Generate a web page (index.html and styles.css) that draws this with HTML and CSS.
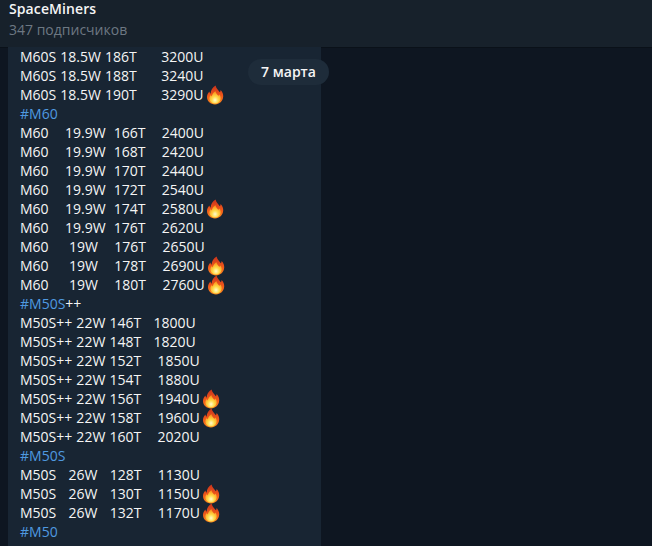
FILE: index.html
```html
<!DOCTYPE html>
<html lang="en">
<head>
  <meta charset="UTF-8">
  <meta name="viewport" content="width=device-width, initial-scale=1.0">
  <title>SpaceMiners</title>
  <link rel="stylesheet" href="styles.css">
</head>
<body>
  <svg class="defs" width="0" height="0" aria-hidden="true">
    <defs>
      <linearGradient id="flameOuter" x1="0" y1="0" x2="0" y2="1">
        <stop offset="0" stop-color="#c9331c"/>
        <stop offset="0.55" stop-color="#f0591a"/>
        <stop offset="1" stop-color="#fb8a1e"/>
      </linearGradient>
      <radialGradient id="flameInner" cx="50%" cy="72%" r="62%">
        <stop offset="0" stop-color="#fffbd0"/>
        <stop offset="0.45" stop-color="#ffdc4a"/>
        <stop offset="1" stop-color="#fb9a1e"/>
      </radialGradient>
      <symbol id="flame" viewBox="0 0 20 20">
        <path fill="url(#flameOuter)" d="M10.6 0.6C11.2 3.6 13 5 14.8 7.2C15.4 6.6 15.6 5.8 15.6 5C17.6 7 18.4 9.4 18.2 11.8C17.9 16.2 14.4 19.4 10 19.4C5.6 19.4 2 16.2 2 12C2 9.6 3 7.8 4.4 6.4C4.5 7.4 4.9 8.2 5.6 8.8C5.6 5.6 7.6 2.4 10.6 0.6Z"/>
        <path fill="url(#flameInner)" d="M10.4 6.2C11 8.6 12.4 9.4 13.4 10.8C14 10.4 14.2 9.9 14.3 9.4C15.4 10.8 15.9 12.2 15.7 13.6C15.4 16.6 13 18.6 10 18.6C7 18.6 4.5 16.6 4.4 13.6C4.3 12 5 10.8 5.9 10C6.1 10.6 6.4 11.1 6.9 11.5C7 9.4 8.4 7.4 10.4 6.2Z"/>
      </symbol>
    </defs>
  </svg>

  <header class="top-bar">
    <div class="channel-name">SpaceMiners</div>
    <div class="channel-subs">347 подписчиков</div>
  </header>

  <main class="chat">
    <div class="bubble">
      <div class="line">M60S 18.5W 186T      3200U</div>
      <div class="line">M60S 18.5W 188T      3240U</div>
      <div class="line">M60S 18.5W 190T      3290U<svg class="fire"><use href="#flame"/></svg></div>
      <div class="line"><a class="tag">#M60</a></div>
      <div class="line">M60    19.9W  166T    2400U</div>
      <div class="line">M60    19.9W  168T    2420U</div>
      <div class="line">M60    19.9W  170T    2440U</div>
      <div class="line">M60    19.9W  172T    2540U</div>
      <div class="line">M60    19.9W  174T    2580U<svg class="fire"><use href="#flame"/></svg></div>
      <div class="line">M60    19.9W  176T    2620U</div>
      <div class="line">M60     19W    176T    2650U</div>
      <div class="line">M60     19W    178T    2690U<svg class="fire"><use href="#flame"/></svg></div>
      <div class="line">M60     19W    180T    2760U<svg class="fire"><use href="#flame"/></svg></div>
      <div class="line"><a class="tag">#M50S</a>++</div>
      <div class="line">M50S++ 22W 146T   1800U</div>
      <div class="line">M50S++ 22W 148T   1820U</div>
      <div class="line">M50S++ 22W 152T    1850U</div>
      <div class="line">M50S++ 22W 154T    1880U</div>
      <div class="line">M50S++ 22W 156T    1940U<svg class="fire"><use href="#flame"/></svg></div>
      <div class="line">M50S++ 22W 158T    1960U<svg class="fire"><use href="#flame"/></svg></div>
      <div class="line">M50S++ 22W 160T    2020U</div>
      <div class="line"><a class="tag">#M50S</a></div>
      <div class="line">M50S   26W   128T    1130U</div>
      <div class="line">M50S   26W   130T    1150U<svg class="fire"><use href="#flame"/></svg></div>
      <div class="line">M50S   26W   132T    1170U<svg class="fire"><use href="#flame"/></svg></div>
      <div class="line"><a class="tag">#M50</a></div>
    </div>
    <div class="date-pill">7 марта</div>
  </main>
</body>
</html>
```

FILE: styles.css
```css
html, body {
  height: 100%;
}

body {
  margin: 0;
  overflow: hidden;
  display: flex;
  flex-direction: column;
  background-color: #0e1621;
  color: #f5f5f5;
  font-family: "Open Sans", sans-serif;
  font-size: 14px;
}

.defs {
  position: absolute;
}

.top-bar {
  height: 47px;
  flex-shrink: 0;
  padding-left: 9px;
  background-color: #17212b;
  box-shadow: 0 1px 0 #0a1119;
}

.channel-name {
  height: 18px;
  line-height: 18px;
  font-size: 14px;
  font-weight: 600;
  letter-spacing: 0.1px;
}

.channel-subs {
  margin-top: 2px;
  font-size: 14px;
  line-height: 19px;
  color: #6d7883;
}

.chat {
  position: relative;
  flex: 1;
  padding-left: 8px;
  overflow: hidden;
}

.bubble {
  width: 313px;
  box-sizing: border-box;
  height: 100%;
  padding: 0 0 0 12px;
  background-color: #182533;
}

.line {
  height: 19px;
  line-height: 19px;
  white-space: pre;
  word-spacing: 0.45px;
}

.tag {
  color: #4f9ae0;
}

.fire {
  width: 20px;
  height: 20px;
  vertical-align: -5px;
  margin-left: 1px;
}

.date-pill {
  position: absolute;
  top: 12px;
  left: 248px;
  width: 81px;
  height: 26px;
  line-height: 25px;
  text-align: center;
  border-radius: 13px;
  background-color: #1e2c3a;
  font-weight: 600;
  font-size: 14px;
}
```
